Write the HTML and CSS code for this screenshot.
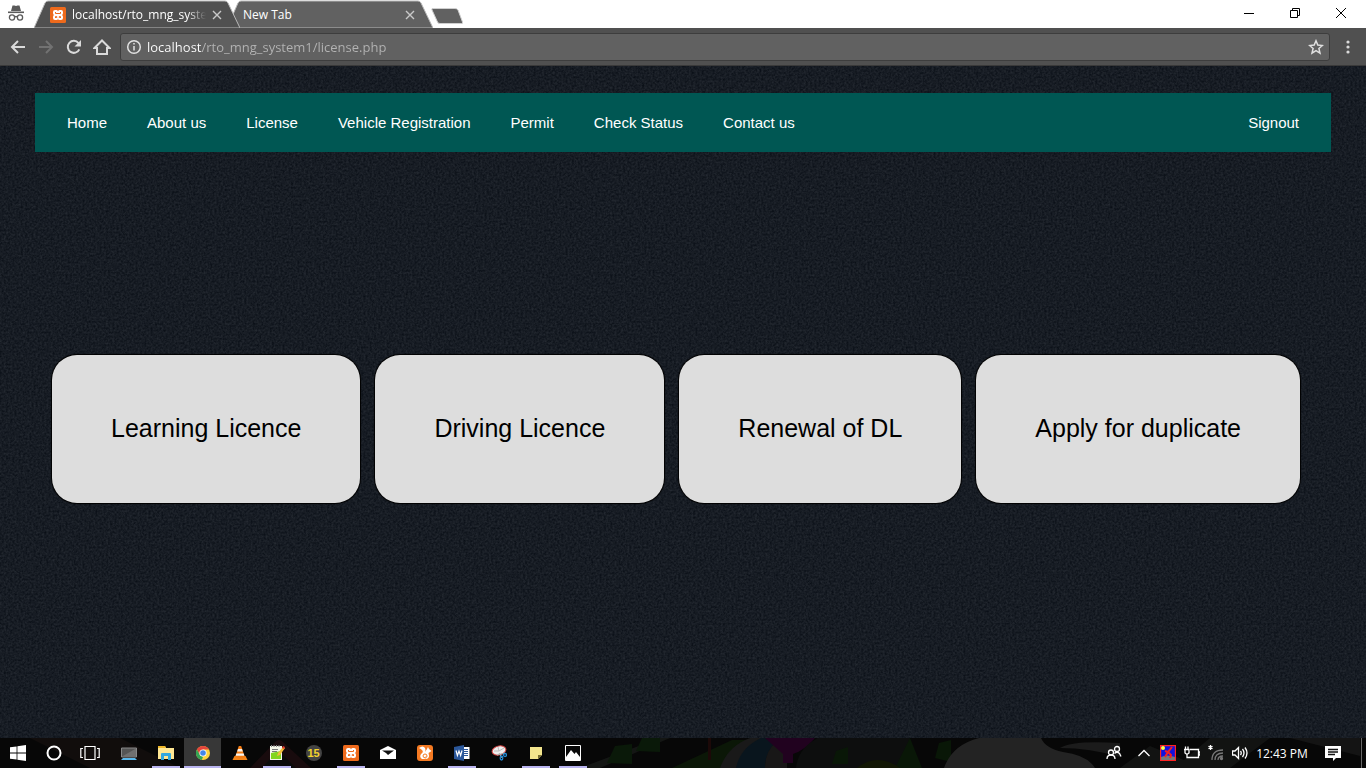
FILE: index.html
```html
<!DOCTYPE html>
<html lang="en">
<head>
<meta charset="utf-8">
<title>License</title>
<link rel="stylesheet" href="styles.css">
</head>
<body>
<div class="screen">
  <header class="tabstrip">
    <svg class="incognito" viewBox="0 0 16 18" role="img" aria-label="Incognito"><path d="M4.500 1.500h2l1.500.6 1.500-.6h2L13 7H3z" fill="#5a5a5a"/><path d="M0 7.500h16v1.600H0z" fill="#5a5a5a"/><g fill="none" stroke="#5a5a5a" stroke-width="1.300"><circle cx="4" cy="13.500" r="2.600"/><circle cx="12" cy="13.500" r="2.600"/><path d="M6.500 13q1.500-1 3 0"/></g></svg>
    <div class="tab tab-active">
      <svg class="tab-shape" viewBox="0 0 206 28" preserveAspectRatio="none" aria-hidden="true"><path d="M0 28L11 3Q12 1 14 1H191Q193 1 194 3L206 28z" fill="#505050" stroke="#b8b8b8"/></svg>
      <svg class="favicon" viewBox="0 0 16 16" aria-hidden="true"><rect width="16" height="16" rx="1.500" fill="#ee6a1c"/><path d="M5 3h1.500Q8 3 8 4.500 8 3 9.500 3H11q2 0 2 2v1q0 1.500-1 2 1 .5 1 2v1q0 2-2 2H9.500Q8 13 8 11.500 8 13 6.500 13H5q-2 0-2-2v-1q0-1.500 1-2-1-.5-1-2V5q0-2 2-2z" fill="#fff"/><path d="M5.500 5v1.500h5V5M5.500 11V9.500h1.200V11M10.500 11V9.500H9.300V11" fill="none" stroke="#ee6a1c"/></svg>
      <button class="tab-title fade">localhost/rto_mng_system1</button>
      <button class="tab-close" aria-label="Close tab"><svg viewBox="0 0 10 10"><path d="M1 1l8 8M9 1L1 9"/></svg></button>
    </div>
    <div class="tab tab-back">
      <svg class="tab-shape" viewBox="0 0 206 28" preserveAspectRatio="none" aria-hidden="true"><path d="M0 28L11 3Q12 1 14 1H191Q193 1 194 3L206 28z" fill="#616161" stroke="#b8b8b8"/></svg>
      <button class="tab-title">New Tab</button>
      <button class="tab-close" aria-label="Close tab"><svg viewBox="0 0 10 10"><path d="M1 1l8 8M9 1L1 9"/></svg></button>
    </div>
    <button class="new-tab" aria-label="New tab"><svg viewBox="0 0 34 18"><path d="M2.500 1.500H25Q27 1.500 28 3l4.500 12q.5 1.500-1 1.500H10q-2 0-2.500-1.500L2 3q-.5-1.500.5-1.500z" fill="#616161" stroke="#cfcfcf"/></svg></button>
    <div class="window-controls">
      <button aria-label="Minimize"><svg viewBox="0 0 12 12"><path d="M1 6.500h10"/></svg></button>
      <button aria-label="Restore"><svg viewBox="0 0 12 12"><path d="M1.500 3.500h7v7h-7zM3.500 3.500v-2h7v7h-2"/></svg></button>
      <button aria-label="Close"><svg viewBox="0 0 12 12"><path d="M1 1l10 10M11 1L1 11"/></svg></button>
    </div>
  </header>

  <div class="toolbar">
    <button class="tool" aria-label="Back"><svg viewBox="0 0 16 16"><path d="M15 8H2.500M8 2L2 8l6 6"/></svg></button>
    <button class="tool tool-off" aria-label="Forward"><svg viewBox="0 0 16 16"><path d="M1 8h12.500M8 2l6 6-6 6"/></svg></button>
    <button class="tool" aria-label="Reload"><svg viewBox="0 0 16 16"><path d="M13.300 10.300A6 6 0 1 1 12.500 4.100"/><path d="M15 1v6.500H8.500z" class="solid"/></svg></button>
    <button class="tool" aria-label="Home"><svg viewBox="0 0 18 16"><path d="M1.500 9L9 1.500 16.500 9H14v6H4V9z"/></svg></button>
    <div class="omnibox">
      <svg class="info" viewBox="0 0 16 16" aria-hidden="true"><circle cx="8" cy="8" r="6.300"/><path d="M8 7v4.500M8 4v1.600"/></svg>
      <input class="address" type="text" aria-label="Address" value="localhost/rto_mng_system1/license.php">
      <button class="star" aria-label="Bookmark"><svg viewBox="0 0 16 16"><path d="M8 1.800l1.800 4.300 4.600.4-3.500 3 1.100 4.600L8 11.700l-4 2.400 1.100-4.600-3.500-3 4.600-.4z"/></svg></button>
    </div>
    <button class="menu" aria-label="Menu"><svg viewBox="0 0 4 14"><circle cx="2" cy="2" r="1.600"/><circle cx="2" cy="7" r="1.600"/><circle cx="2" cy="12" r="1.600"/></svg></button>
  </div>

  <main class="page">
    <svg class="grain" aria-hidden="true"><filter id="grain" x="0" y="0" width="100%" height="100%" color-interpolation-filters="sRGB"><feTurbulence type="fractalNoise" baseFrequency="0.47" numOctaves="2" seed="4"/><feColorMatrix values=".14 0 0 0 .02  .14 0 0 0 .04  .14 0 0 0 .07  0 0 0 0 1"/></filter><rect width="100%" height="100%" filter="url(#grain)"/></svg>
    <nav class="site-nav">
      <a href="#">Home</a>
      <a href="#">About us</a>
      <a href="#">License</a>
      <a href="#">Vehicle Registration</a>
      <a href="#">Permit</a>
      <a href="#">Check Status</a>
      <a href="#">Contact us</a>
      <a class="signout" href="#">Signout</a>
    </nav>
    <div class="cards">
      <a class="card" href="#">Learning Licence</a>
      <a class="card" href="#">Driving Licence</a>
      <a class="card" href="#">Renewal of DL</a>
      <a class="card" href="#">Apply for duplicate</a>
    </div>
  </main>

  <footer class="taskbar">
    <svg class="wallpaper" viewBox="0 0 1366 30" preserveAspectRatio="none" aria-hidden="true">
      <rect width="1366" height="30" fill="#070707"/>
      <path d="M30 0h90l60 30H90z" fill="#110d0c"/><path d="M250 30l25-26q4-4 8 0l28 26z" fill="#180b0d"/><path d="M262 30l16-18 18 18z" fill="#0b0b0b"/>
      <path d="M580 30l80-30h10l-70 30z" fill="#141614"/><path d="M672 30l60-28h18l-30 28z" fill="#0b1707"/>
      <path d="M607 25l8-17 17-2v20zM636 13l6-13h18v14z" fill="#0a1909"/><path d="M708 0h3v22h-3z" fill="#1c0908"/>
      <path d="M720 30q8-22 30-30h18l-16 30z" fill="#191919"/><path d="M736 30q4-20 25-30h20q-16 12-16 30z" fill="#09151d"/><path d="M765 30q0-16 10-25l12 10v15z" fill="#181717"/>
      <path d="M765 0h50q-10 12-22 16v9h-10v-9z" fill="#21021f"/><path d="M796 30q2-20 22-30h92v30z" fill="#0d0e0e"/>
      <path d="M832 26l4-13 12-4v17zM895 30l15-30 12 30zM935 20l4-15 12-3v22z" fill="#091707"/><path d="M857 30q20-16 43 0z" fill="#121704"/>
      <path d="M944 30q8-23 35-30h62q4 10 22 14 24 3 32 16z" fill="#232323"/><path d="M1060 10q12-8 60-5v14q-30-9-60-9z" fill="#1b1b1b"/>
      <path d="M1120 30l30-22 34 14 26-22h60l-40 30z" fill="#121312"/><path d="M1290 0l70 18V0z" fill="#141414"/>
    </svg>
    <div class="system-apps">
      <button aria-label="Start"><svg viewBox="0 0 16 16" fill="#fff"><path d="M0 2.300l6.600-.9v6.200H0zM7.400 1.300L16 0v7.600H7.400zM0 8.400h6.600v6.200L0 13.700zM7.400 8.400H16V16l-8.600-1.200z"/></svg></button>
      <button aria-label="Cortana"><svg viewBox="0 0 16 16"><circle cx="8" cy="8" r="6.500" fill="none" stroke="#fff" stroke-width="2"/></svg></button>
      <button aria-label="Task View"><svg class="wide" viewBox="0 0 20 16" fill="none" stroke="#fff" stroke-width="1.200"><path d="M5 1.500h10v13H5zM3 3.500H.8v9H3M17 3.500h2.200v9H17"/></svg></button>
    </div>
    <div class="apps">
      <button aria-label="This PC"><svg viewBox="0 0 16 16"><path d="M.5 3h15v9H.5z" fill="#555" stroke="#888"/><path d="M1 11.500L15 3.500v8z" fill="#707070"/><path d="M2 13h12l2 2H0z" fill="#5ab8ed"/></svg></button>
      <button class="open" aria-label="File Explorer"><svg viewBox="0 0 16 16"><path d="M0 1h7l1 2h8v11H0z" fill="#ffe793"/><path d="M0 1h7l1 2H0z" fill="#efb728"/><path d="M3 15V9q0-1 1-1h8q1 0 1 1v6h-3v-4H6v4z" fill="#33a8df"/></svg></button>
      <button class="open current" aria-label="Chrome"><svg viewBox="0 0 16 16"><circle cx="8" cy="8" r="7" fill="#ffd43c"/><path d="M1.900 4.500A7 7 0 0 1 14.100 4.500H8L5 10z" fill="#e5443c"/><path d="M1.900 4.500L5 10l3 2-1.300 2.900A7 7 0 0 1 1.900 4.500z" fill="#33a455"/><circle cx="8" cy="8" r="3.600" fill="#fff"/><circle cx="8" cy="8" r="2.800" fill="#4486e8"/></svg></button>
      <button aria-label="VLC"><svg viewBox="0 0 16 16"><path d="M2.500 11h11l2 4H.5z" fill="#f58518"/><path d="M6.800 1h2.400L13 12.500q-5 2-10 0z" fill="#f47c13"/><path d="M6 4h4l.8 2.500H5.200zM4.300 8.500h7.400l.7 2.300H3.600z" fill="#f4f4f4"/></svg></button>
      <button class="open" aria-label="Notepad++"><svg viewBox="0 0 16 16"><path d="M1 1h12v14H1z" fill="#f4f5e8"/><path d="M2 8l10-2v8H2z" fill="#82d51b"/><path d="M2.500 0v2M5 0v2M7.500 0v2M10 0v2" stroke="#888"/><path d="M3 4.500h6M3 6.500h5" stroke="#777"/><path d="M8 11l1-3 5-6 2 1-5 7z" fill="#f2bd38"/><path d="M13 3l1-2 2 1-1 2z" fill="#e63b2d"/></svg></button>
      <button aria-label="Calendar 15"><span class="ball">15</span></button>
      <button class="open" aria-label="XAMPP"><svg viewBox="0 0 16 16"><rect width="16" height="16" rx="1.500" fill="#ee6a1c"/><path d="M5 3h1.500Q8 3 8 4.500 8 3 9.500 3H11q2 0 2 2v1q0 1.500-1 2 1 .5 1 2v1q0 2-2 2H9.500Q8 13 8 11.500 8 13 6.500 13H5q-2 0-2-2v-1q0-1.500 1-2-1-.5-1-2V5q0-2 2-2z" fill="#fff"/><path d="M5.500 5v1.500h5V5M5.500 11V9.500h1.200V11M10.500 11V9.500H9.300V11" fill="none" stroke="#ee6a1c"/></svg></button>
      <button aria-label="Mail"><svg viewBox="0 0 16 16"><path d="M0 5l8-4 8 4v9H0z" fill="#fff"/><path d="M2 5.500h12L8 10 6 8z" fill="#111"/></svg></button>
      <button aria-label="UC Browser"><svg viewBox="0 0 16 16"><rect width="16" height="16" rx="3" fill="#f57a22"/><path d="M2 3q4-3 6 0 1 2 0 4l2-3 1-2 1 2 2.500 2-3 2q2 6-3.500 6H5q-3-2-1-5 3-2 1-4-1-1-3-2z" fill="#fff"/><path d="M9 13q-3 0-3-2t2-2 2 2-1.500 1" fill="none" stroke="#f57a22"/></svg></button>
      <button class="open" aria-label="Word"><svg viewBox="0 0 16 16"><path d="M8 2h7.500v12H8z" fill="#fff"/><path d="M9.500 4.500H14M9.500 6.500H14M9.500 8.500H14M9.500 10.500H14" stroke="#2b579a"/><path d="M0 2l10-2v16L0 14z" fill="#2b579a"/><path d="M2 5.500l1.400 5L5 6l1.600 4.500L8 5.500" fill="none" stroke="#fff" stroke-width="1.200"/></svg></button>
      <button aria-label="Snipping Tool"><svg viewBox="0 0 16 16"><ellipse cx="8" cy="5.500" rx="7" ry="4.500" transform="rotate(-14 8 5.500)" fill="#eee" stroke="#d64543"/><path d="M7 2l1 4 5-3M3 6l5 0" stroke="#bbb" fill="none"/><path d="M6 10l8-2M8 8l3 5" stroke="#aaa"/><g fill="none" stroke="#2389d1" stroke-width="1.300"><ellipse cx="10.500" cy="13" rx="1.300" ry="2"/><circle cx="14" cy="10" r="1.500"/></g></svg></button>
      <button class="open" aria-label="Sticky Notes"><svg viewBox="0 0 16 16"><path d="M2 2h12v8l-4 4H2z" fill="#f3e58d"/><path d="M10 10h4l-4 4z" fill="#776d32"/></svg></button>
      <button class="open" aria-label="Photos"><svg viewBox="0 0 16 16"><path d="M.5.500h15v15H.5z" fill="#080808" stroke="#fff"/><path d="M1 12l5-7 3.500 4L11 7l4 5v3H1z" fill="#fff"/></svg></button>
    </div>
    <div class="tray">
      <button class="people" aria-label="People"><svg viewBox="0 0 16 16"><circle cx="11" cy="4" r="2.500"/><circle cx="5" cy="7.500" r="2.500"/><path d="M1 14q0-4 4-4t4 4M8.500 8.500Q11 6 13.500 8.500l1.500 3"/></svg></button>
      <button aria-label="Show hidden icons"><svg viewBox="0 0 16 16"><path d="M2.500 11L8 5.500l5.500 5.500"/></svg></button>
      <button aria-label="Graphics"><svg viewBox="0 0 16 16"><path d="M.5.500h15v15H.5z" fill="#1111df" stroke="#f22"/><circle cx="3" cy="3" r="2" fill="#ff4" stroke="none"/><path d="M1 12q6-3 14 0v3H1z" fill="#777" stroke="none"/><path d="M12 2L8 7l-3-1M8 7l3 3-1 3M8 7l-3 5" stroke="#f32121" stroke-width="2"/></svg></button>
      <button aria-label="Battery"><svg viewBox="0 0 16 16"><path d="M6 4.500h8.500v8H5M14.500 7H16v3h-1.500M0 4.500h5V8L3 9.500 1 8V4.500M1.500 4V1.500M4 4V1.500M3 9v3.500h2"/></svg></button>
      <button aria-label="Network"><svg viewBox="0 0 16 16"><g stroke="#777"><path d="M4 15Q4 5 15 5M7 15q0-7 8-7M10 15q0-4 5-4"/><circle cx="13.500" cy="13.500" r="1" fill="#777"/></g><path d="M2.500 0v5M.5 1.200l4 2.600M4.500 1.200l-4 2.600"/></svg></button>
      <button aria-label="Volume"><svg viewBox="0 0 16 16"><path d="M.5 6h2.500L6.500 2.500v11L3 10H.5zM8.500 6q1.500 2 0 4M10.500 4q3 4 0 8M13 2.500q4 5.500 0 11"/></svg></button>
      <button class="clock">12:43 PM</button>
      <button class="notices" aria-label="Action Center"><svg viewBox="0 0 16 16"><path d="M0 1h16v12h-5l-3 3v-3H0z" fill="#fff" stroke="none"/><path d="M3 4.500h10M3 7h10M3 9.500h7" stroke="#111"/></svg></button>
    </div>
  </footer>
</div>
</body>
</html>
```
FILE: styles.css
```css
* { box-sizing: border-box; }
body { margin: 0; font-family: "Open Sans", "Noto Sans", sans-serif; }
button { margin: 0; padding: 0; border: 0; background: none; font: inherit; color: inherit; }
svg { display: block; flex: none; }

.screen { display: flex; flex-direction: column; min-height: 100vh; background: #050505; }

.tabstrip { display: flex; height: 28px; padding-left: 8px; background: #fff; }
.incognito { width: 16px; height: 18px; margin: 4px 10px 0 0; }
.tab { position: relative; display: flex; align-items: center; width: 206px; height: 28px; padding: 1px 18px 0 16px; font-size: 12px; color: #fff; }
.tab-active { z-index: 1; }
.tab-back { margin-left: -13px; }
.tab-shape { position: absolute; inset: 0; width: 100%; height: 100%; }
.favicon { position: relative; width: 16px; height: 16px; margin-right: 6px; }
.tab-title { position: relative; flex: 1; min-width: 0; overflow: hidden; white-space: nowrap; text-align: left; line-height: 18px; }
.fade { -webkit-mask-image: linear-gradient(90deg, #000 86%, transparent); mask-image: linear-gradient(90deg, #000 86%, transparent); }
.tab-close { position: relative; width: 10px; margin-left: 6px; }
.tab-close svg { width: 10px; height: 10px; stroke: #c9c9c9; stroke-width: 1.400; }
.new-tab { margin-left: -3px; align-self: center; padding-top: 3px; }
.new-tab svg { width: 34px; height: 18px; }
.window-controls { display: flex; margin-left: auto; padding-right: 2px; }
.window-controls button { display: grid; place-items: center; width: 46px; height: 26px; }
.window-controls svg { width: 12px; height: 12px; fill: none; stroke: #000; }

.toolbar { display: flex; align-items: center; height: 38px; padding: 0 10px 0 4px; background: #505050; border-bottom: 1px solid #3a3a3a; }
.tool { display: grid; place-items: center; width: 28px; height: 28px; }
.tool svg { height: 16px; fill: none; stroke: #dadada; stroke-width: 2; }
.tool .solid { fill: #dadada; stroke: none; }
.tool-off svg { stroke: #727272; }
.omnibox { display: flex; align-items: center; flex: 1; height: 28px; margin-left: 4px; padding: 0 5px; background: #616161; border: 1px solid #3d3d3d; border-radius: 3px; }
.info { width: 16px; height: 16px; fill: none; stroke: #e2e2e2; stroke-width: 1.500; }
.address { flex: 1; min-width: 0; margin: 0 0 0 5px; padding: 0; border: 0; font: 13px/20px "Open Sans", "Noto Sans", sans-serif; color: transparent; background: linear-gradient(90deg, #fff 55px, #b4b4b4 55px); -webkit-background-clip: text; background-clip: text; }
.star svg { width: 16px; height: 16px; fill: none; stroke: #e0e0e0; stroke-width: 1.500; }
.menu { display: grid; place-items: center; width: 16px; height: 28px; margin-left: 10px; }
.menu svg { width: 4px; height: 14px; fill: #dadada; }

.page { position: relative; flex: 1; padding: 27px 35px 0; background: #171c24; font-family: "Liberation Sans", Arial, sans-serif; isolation: isolate; }
.grain { position: absolute; inset: 0; z-index: -1; width: 100%; height: 100%; }
.site-nav { display: flex; padding: 0 12px; background: #005753; font-size: 15px; line-height: 19px; }
.site-nav a { padding: 20px; color: #fff; text-decoration: none; }
.site-nav .signout { margin-left: auto; }
.cards { display: flex; gap: 15px; padding: 203px 0 0 17px; }
.card { padding: 59px 59px 61px; border-radius: 25px; background: #ddd; box-shadow: 0 0 1px 1px #000; color: #000; font-size: 25px; line-height: 28px; white-space: nowrap; text-decoration: none; }

.taskbar { position: relative; display: flex; height: 30px; color: #fff; isolation: isolate; }
.wallpaper { position: absolute; inset: 0; z-index: -1; width: 100%; height: 100%; }
.system-apps, .apps, .tray { display: flex; }
.system-apps button, .apps button { display: grid; place-items: center; height: 30px; }
.system-apps button { width: 36px; }
.system-apps svg, .apps svg { width: 16px; height: 16px; }
.system-apps .wide { width: 20px; }
.apps { margin-left: 2px; }
.apps button { width: 37px; }
.apps .open { background: linear-gradient(#b9b4ef, #b9b4ef) center bottom / 28px 2px no-repeat; }
.apps .current { background-color: #373737; background-size: 37px 2px; }
.ball { width: 16px; border-radius: 8px; background: #444; color: #f4d32c; font: bold 11px/16px "Liberation Sans", Arial, sans-serif; }
.tray { margin-left: auto; padding-right: 4px; }
.tray button { display: grid; place-items: center; width: 24px; height: 30px; }
.tray svg { width: 16px; height: 16px; fill: none; stroke: #fff; stroke-width: 1.300; }
.tray .people { width: 36px; }
.tray .clock { width: 60px; font-size: 12px; white-space: nowrap; }
.tray .notices { width: 50px; padding-right: 8px; border-right: 1px solid #666; }
```
